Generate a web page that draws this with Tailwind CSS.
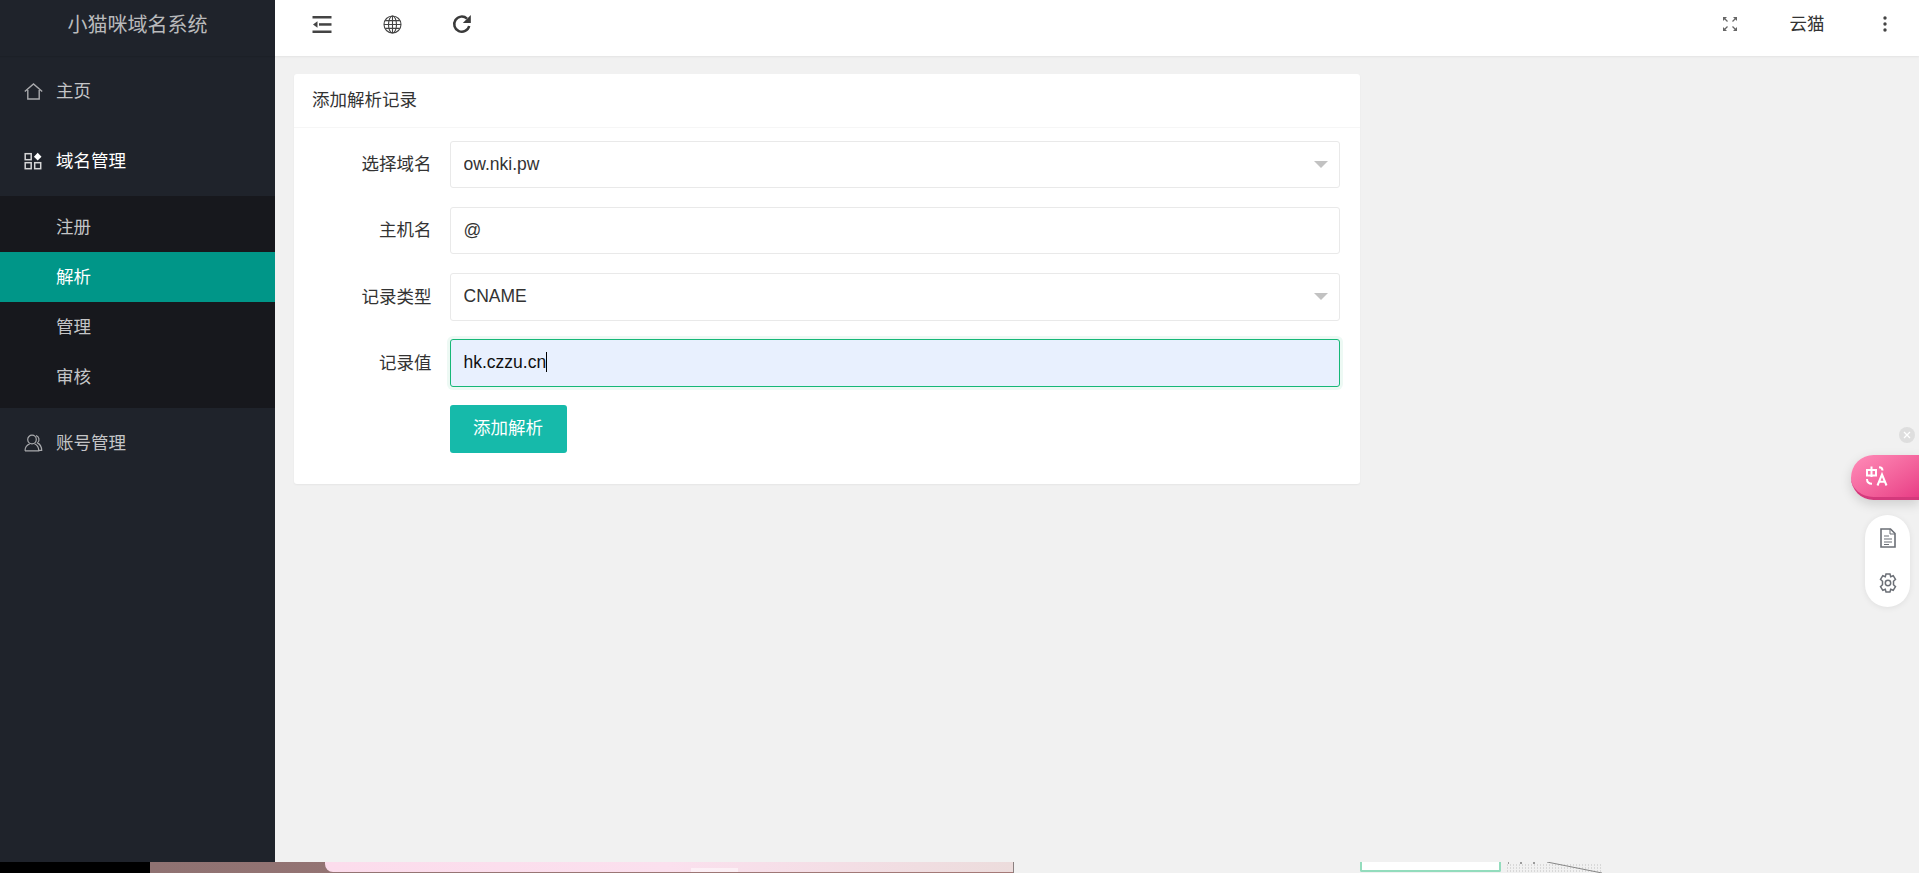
<!DOCTYPE html>
<html lang="zh-CN">
  <head>
    <meta charset="UTF-8" />
    <title>小猫咪域名系统</title>
    <script src="https://cdn.jsdelivr.net/npm/@tailwindcss/browser@4"></script>
  </head>
  <body class="bg-[#f1f1f1] h-[873px] overflow-hidden relative font-['Liberation_Sans','Noto_Sans_CJK_SC',sans-serif] text-[17.5px] text-[#333]">
    <div class="flex h-[862px]">
      <!-- sidebar -->
      <aside class="w-[275px] shrink-0 bg-[#1f232b] text-[#c4c5c7]">
        <div class="h-[56px] pb-1.5 flex items-center justify-center text-[20px] text-[#b9babc] shadow-[0_1px_1px_rgba(0,0,0,0.08)]">小猫咪域名系统</div>
        <a class="h-[70px] flex items-center pl-6 gap-[13px]">
          <svg class="w-[19px] h-[17px]" viewBox="0 0 19 17" fill="none" stroke="#a9aaad" stroke-width="1.400"><path d="M.8 8.500 9.500 1l8.700 7.500M3.800 7v9h11.400V7"/></svg>
          <span>主页</span>
        </a>
        <a class="h-[70px] flex items-center pl-6 gap-[14px] text-white">
          <svg class="w-[18px] h-[18px]" viewBox="0 0 18 18" fill="none" stroke="#d6d6d7" stroke-width="1.500"><rect x="1.200" y="1.700" width="6" height="6"/><rect x="1.200" y="10.700" width="6" height="6"/><rect x="10.700" y="10.700" width="6" height="6"/><path d="M13.700 .8l3.800 3.900-3.800 3.900-3.800-3.900z" fill="#fff" stroke="none"/></svg>
          <span>域名管理</span>
        </a>
        <div class="bg-[#17181d] py-1.5">
          <div class="h-[50px] flex items-center pl-14">注册</div>
          <div class="h-[50px] flex items-center pl-14 bg-[#009688] text-white">解析</div>
          <div class="h-[50px] flex items-center pl-14">管理</div>
          <div class="h-[50px] flex items-center pl-14">审核</div>
        </div>
        <a class="h-[70px] flex items-center pl-6 gap-[13px]">
          <svg class="w-[19px] h-[18px]" viewBox="0 0 19 18" fill="none" stroke="#a9aaad" stroke-width="1.200"><circle cx="8" cy="5.500" r="4.300"/><path d="M1 16.800c0-4 2.500-6 4.800-7M10.500 9.800c2.300 1 4.200 3 4.300 7H1M12 1.600c3 .6 4.200 5 1.500 7.300 2.500 1.300 4 3.700 4.200 7.400h-2.500"/></svg>
          <span>账号管理</span>
        </a>
      </aside>

      <div class="flex-1 min-w-0">
        <!-- top bar -->
        <header class="h-[56px] bg-white flex items-start justify-between pl-3 shadow-[0_1px_2px_rgba(0,0,0,0.06)]">
          <div class="flex h-[48px]">
            <button class="w-[70px] flex items-center justify-center">
              <svg class="w-[20px] h-[17px]" viewBox="0 0 20 17" fill="#444"><rect x=".5" y="0" width="19" height="2.500"/><rect x=".5" y="14.500" width="19" height="2.500"/><rect x="7" y="7.200" width="12.500" height="2.500"/><path d="M1 8.500l4.500-3.300v6.600z"/></svg>
            </button>
            <button class="w-[70px] flex items-center justify-center">
              <svg class="w-[19px] h-[19px]" viewBox="0 0 19 19" fill="none" stroke="#444" stroke-width="1.100"><circle cx="9.500" cy="9.500" r="8.500"/><ellipse cx="9.500" cy="9.500" rx="4" ry="8.500"/><path d="M9.500 1v17M2.200 5.600h14.600M1 9.500h17M2.200 13.400h14.600"/></svg>
            </button>
            <button class="w-[70px] flex items-center justify-center">
              <svg class="w-[20px] h-[20px]" viewBox="0 0 20 20" fill="none" stroke="#3a3a3a" stroke-width="2.500"><path d="M17.200 12A7.600 7.600 0 1 1 15 4.600"/><path d="M18.800 1v8h-8z" fill="#3a3a3a" stroke="none"/></svg>
            </button>
          </div>
          <div class="flex h-[48px] items-center">
            <button class="w-[66px] flex items-center justify-center">
              <svg class="w-[16px] h-[16px]" viewBox="0 0 16 16" fill="none" stroke="#666" stroke-width="1.200"><path d="M5.500 5.500 2 2"/><path d="M1 5V1h4z" fill="#666" stroke="none"/><path d="M10.500 5.500 14 2"/><path d="M15 5V1h-4z" fill="#666" stroke="none"/><path d="M5.500 10.500 2 14"/><path d="M1 11v4h4z" fill="#666" stroke="none"/><path d="M10.500 10.500 14 14"/><path d="M15 11v4h-4z" fill="#666" stroke="none"/></svg>
            </button>
            <div class="w-[88px] text-center">云猫</div>
            <button class="w-[68px] flex items-center justify-center">
              <svg class="w-[4px] h-[16px]" viewBox="0 0 4 16" fill="#444"><circle cx="2" cy="2" r="1.700"/><circle cx="2" cy="8" r="1.700"/><circle cx="2" cy="14" r="1.700"/></svg>
            </button>
          </div>
        </header>

        <main class="pt-[18px] pl-[19px]">
          <section class="w-[1066px] h-[410px] bg-white rounded-[3px] shadow-[0_1px_2px_rgba(0,0,0,0.05)]">
            <div class="h-[53.500px] flex items-center pl-[18px] border-b border-[#f6f6f6]">添加解析记录</div>
            <form class="pt-[13px] flex flex-col gap-[18.750px]">
              <div class="flex items-center">
                <label class="w-[137.500px] text-right">选择域名</label>
                <div class="relative ml-[18px] w-[890px] h-[47.500px]">
                  <input readonly value="ow.nki.pw" class="w-full h-full border border-[#e9e9e9] rounded-[3px] pl-[13px] outline-none" />
                  <span class="absolute right-[12px] top-[20px] border-x-[7px] border-x-transparent border-t-[7px] border-t-[#c2c2c2]"></span>
                </div>
              </div>
              <div class="flex items-center">
                <label class="w-[137.500px] text-right">主机名</label>
                <div class="ml-[18px] w-[890px] h-[47.500px]">
                  <input readonly value="@" class="w-full h-full border border-[#e9e9e9] rounded-[3px] pl-[13px] outline-none" />
                </div>
              </div>
              <div class="flex items-center">
                <label class="w-[137.500px] text-right">记录类型</label>
                <div class="relative ml-[18px] w-[890px] h-[47.500px]">
                  <input readonly value="CNAME" class="w-full h-full border border-[#e9e9e9] rounded-[3px] pl-[13px] outline-none" />
                  <span class="absolute right-[12px] top-[20px] border-x-[7px] border-x-transparent border-t-[7px] border-t-[#c2c2c2]"></span>
                </div>
              </div>
              <div class="flex items-center">
                <label class="w-[137.500px] text-right">记录值</label>
                <div class="ml-[18px] w-[890px] h-[47.500px] flex items-center pl-[13px] pb-[2px] bg-[#e8f0fe] border border-[#16b777] rounded-[3px] text-[#111] shadow-[0_0_0_3px_rgba(22,183,119,0.08)]">hk.czzu.cn<span class="w-px h-[20px] bg-black"></span></div>
              </div>
              <div class="pl-[155.500px] -mt-px">
                <button type="button" class="w-[117px] h-[48px] bg-[#16baaa] text-white rounded-[3px]">添加解析</button>
              </div>
            </form>
          </section>
        </main>
      </div>
    </div>

    <!-- bottom strip: page behind showing through -->
    <div class="flex h-[11px]">
      <div class="w-[150px] bg-black"></div>
      <div class="w-[864px] pl-[175px] bg-gradient-to-r from-[#8f7272] to-[#a57a78] border-r border-[#8a8080]">
        <div class="h-[10px] bg-gradient-to-r from-[#fcdcec] via-[#fbe0ee] to-[#ecdcdc] rounded-bl-[8px] relative">
          <div class="absolute left-[366px] top-[6px] w-[47px] h-[4px] bg-white/50"></div>
        </div>
      </div>
      <div class="w-[346px]"></div>
      <div class="w-[141px] h-[10px] bg-white border-2 border-t-0 border-[#93dcbd] rounded-b-[2px]"></div>
      <div class="w-[6px]"></div>
      <svg class="w-[95px] h-[11px]" viewBox="0 0 95 11" fill="none">
        <path d="M0 3h95M0 6h95M0 9h95" stroke="#d8d8d8" stroke-width="2" stroke-dasharray="1 2"/>
        <path d="M1 1h1M13 1h2M26 1h2" stroke="#444" stroke-width="1"/>
        <path d="M40 0 95 11" stroke="#888" stroke-width="1"/>
      </svg>
    </div>

    <!-- translate widget -->
    <div class="absolute left-[1899px] top-[427px] w-4 h-4 rounded-full bg-[#dedede] flex items-center justify-center">
      <svg class="w-2 h-2" viewBox="0 0 8 8" stroke="#fff" stroke-width="1.300"><path d="M1 1l6 6M7 1 1 7"/></svg>
    </div>
    <div class="absolute left-[1851px] top-[455px] w-[68px] h-[45px] rounded-l-[23px] bg-gradient-to-br from-[#ff8cb9] to-[#e83c86] border-b-[3px] border-[#d4397c] shadow-[0_4px_12px_rgba(0,0,0,0.15)] flex items-center pl-[15px] text-white">
      <svg class="w-[22px] h-[20px]" viewBox="0 0 22 20" fill="none" stroke="#fff" stroke-width="2"><path d="M1 4h9v5.500H1zM5.500 .5V11"/><path d="M13 1.200c2.500 0 3.500 1 3.500 3.300M1 13c0 3.500 1.500 4.800 5 4.800"/><path d="M11.500 19.500l4.500-11 4.500 11M13 15.800h6"/></svg>
    </div>
    <div class="absolute left-[1865px] top-[515px] w-[45px] h-[92px] rounded-full bg-white shadow-[0_1px_6px_rgba(0,0,0,0.08)] flex flex-col items-center pt-[13px] gap-[25px]">
      <svg class="w-[16px] h-[20px]" viewBox="0 0 16 20" fill="none" stroke="#6b6f76" stroke-width="1.600"><path d="M1 1h9.500L15 5.500V19H1z"/><path d="M10 1v5h5" stroke-width="1"/><path d="M4 8h5M4 11h8M4 14h8M4 16.500h5" stroke-width="1.100"/></svg>
      <svg class="w-[20px] h-[20px]" viewBox="0 0 20 20" fill="none" stroke="#6b6f76" stroke-width="1.500"><path d="M8 1h4l.7 2.700 2.500-1 2.300 3.700-2 1.900v3.400l2 1.900-2.300 3.700-2.500-1L12 19H8l-.7-2.700-2.500 1-2.300-3.700 2-1.900V8.300l-2-1.900 2.300-3.700 2.500 1z"/><circle cx="10" cy="10" r="2.700"/></svg>
    </div>
  </body>
</html>
